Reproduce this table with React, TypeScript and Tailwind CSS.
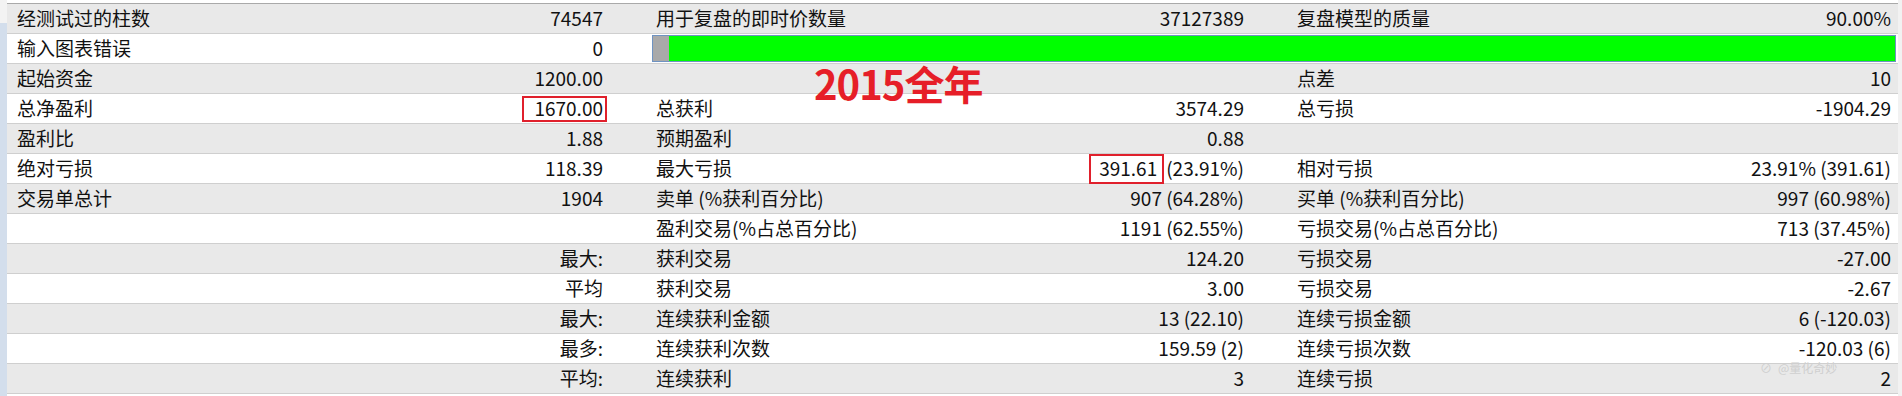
import React from "react";

type Cell = { label?: string; value?: React.ReactNode };

function BoxedValue({ children, tall }: { children: React.ReactNode; tall?: boolean }) {
  return (
    <span
      className={
        tall
          ? "inline-flex items-center h-[30px] border-2 border-[#e0202c] pl-[8px] pr-[5px] mr-[2px]"
          : "inline-flex items-center h-[26px] border-2 border-[#e0202c] pl-[10px] pr-[2px] mr-[-4px]"
      }
    >
      {children}
    </span>
  );
}

const rows: Cell[][] = [
  [
    { label: "经测试过的柱数", value: "74547" },
    { label: "用于复盘的即时价数量", value: "37127389" },
    { label: "复盘模型的质量", value: "90.00%" },
  ],
  [{ label: "输入图表错误", value: "0" }],
  [{ label: "起始资金", value: "1200.00" }, {}, { label: "点差", value: "10" }],
  [
    { label: "总净盈利", value: <BoxedValue>1670.00</BoxedValue> },
    { label: "总获利", value: "3574.29" },
    { label: "总亏损", value: "-1904.29" },
  ],
  [{ label: "盈利比", value: "1.88" }, { label: "预期盈利", value: "0.88" }, {}],
  [
    { label: "绝对亏损", value: "118.39" },
    {
      label: "最大亏损",
      value: (
        <span className="flex items-center">
          <BoxedValue tall>391.61</BoxedValue>
          <span>(23.91%)</span>
        </span>
      ),
    },
    { label: "相对亏损", value: "23.91% (391.61)" },
  ],
  [
    { label: "交易单总计", value: "1904" },
    { label: "卖单 (%获利百分比)", value: "907 (64.28%)" },
    { label: "买单 (%获利百分比)", value: "997 (60.98%)" },
  ],
  [{}, { label: "盈利交易(%占总百分比)", value: "1191 (62.55%)" }, { label: "亏损交易(%占总百分比)", value: "713 (37.45%)" }],
  [{ value: "最大:" }, { label: "获利交易", value: "124.20" }, { label: "亏损交易", value: "-27.00" }],
  [{ value: "平均" }, { label: "获利交易", value: "3.00" }, { label: "亏损交易", value: "-2.67" }],
  [{ value: "最大:" }, { label: "连续获利金额", value: "13 (22.10)" }, { label: "连续亏损金额", value: "6 (-120.03)" }],
  [{ value: "最多:" }, { label: "连续获利次数", value: "159.59 (2)" }, { label: "连续亏损次数", value: "-120.03 (6)" }],
  [{ value: "平均:" }, { label: "连续获利", value: "3" }, { label: "连续亏损", value: "2" }],
];

function Segment({ cell }: { cell?: Cell }) {
  return (
    <div className="w-full h-full flex items-center justify-between pl-[10px]">
      <span>{cell?.label}</span>
      <span className="flex items-center">{cell?.value}</span>
    </div>
  );
}

export default function App() {
  return (
    <div className="relative w-[1902px] h-[396px] bg-[#f2f2f2] flex font-['Noto_Sans_CJK_SC',sans-serif] text-[19px] text-[#111] overflow-hidden">
      <div className="w-[7px] flex flex-col">
        <div className="h-[23px] bg-[#f3f3f3]" />
        <div className="flex-1 bg-[#d3deec]" />
      </div>

      <div className="w-[1891px] pt-[3px] bg-white">
        <div className="border-t border-[#a9a9a9]">
          {rows.map((row, i) => (
            <div
              key={i}
              className={`flex h-[30px] border-b border-[#cfcfcf] ${i % 2 === 0 ? "bg-[#e9e9e9]" : "bg-white"}`}
            >
              <div className="w-[639px] pr-[43px] flex">
                <Segment cell={row[0]} />
              </div>
              {i === 1 ? (
                <div className="flex-1 pl-[6px] pr-[2px] py-[1px]">
                  <div className="h-full border border-[#6f93c2] flex">
                    <div className="w-[16px] bg-[#a9a9a9]" />
                    <div className="flex-1 bg-[#00ff00]" />
                  </div>
                </div>
              ) : (
                <>
                  <div className="w-[641px] pr-[43px] flex">
                    <Segment cell={row[1]} />
                  </div>
                  <div className="flex-1 pr-[7px] flex">
                    <Segment cell={row[2]} />
                  </div>
                </>
              )}
            </div>
          ))}
        </div>
      </div>

      <div className="absolute left-[814px] top-[58px] text-[40px] leading-[50px] font-semibold text-[#e61e28] tracking-[-1px]">
        2015全年
      </div>

      <div className="absolute left-[1760px] top-[362px] text-[12px] leading-[12px] text-[#cfcfcf] flex items-center gap-[6px]">
        <span>⊘</span>
        <span>@量化奇妙</span>
      </div>
    </div>
  );
}
